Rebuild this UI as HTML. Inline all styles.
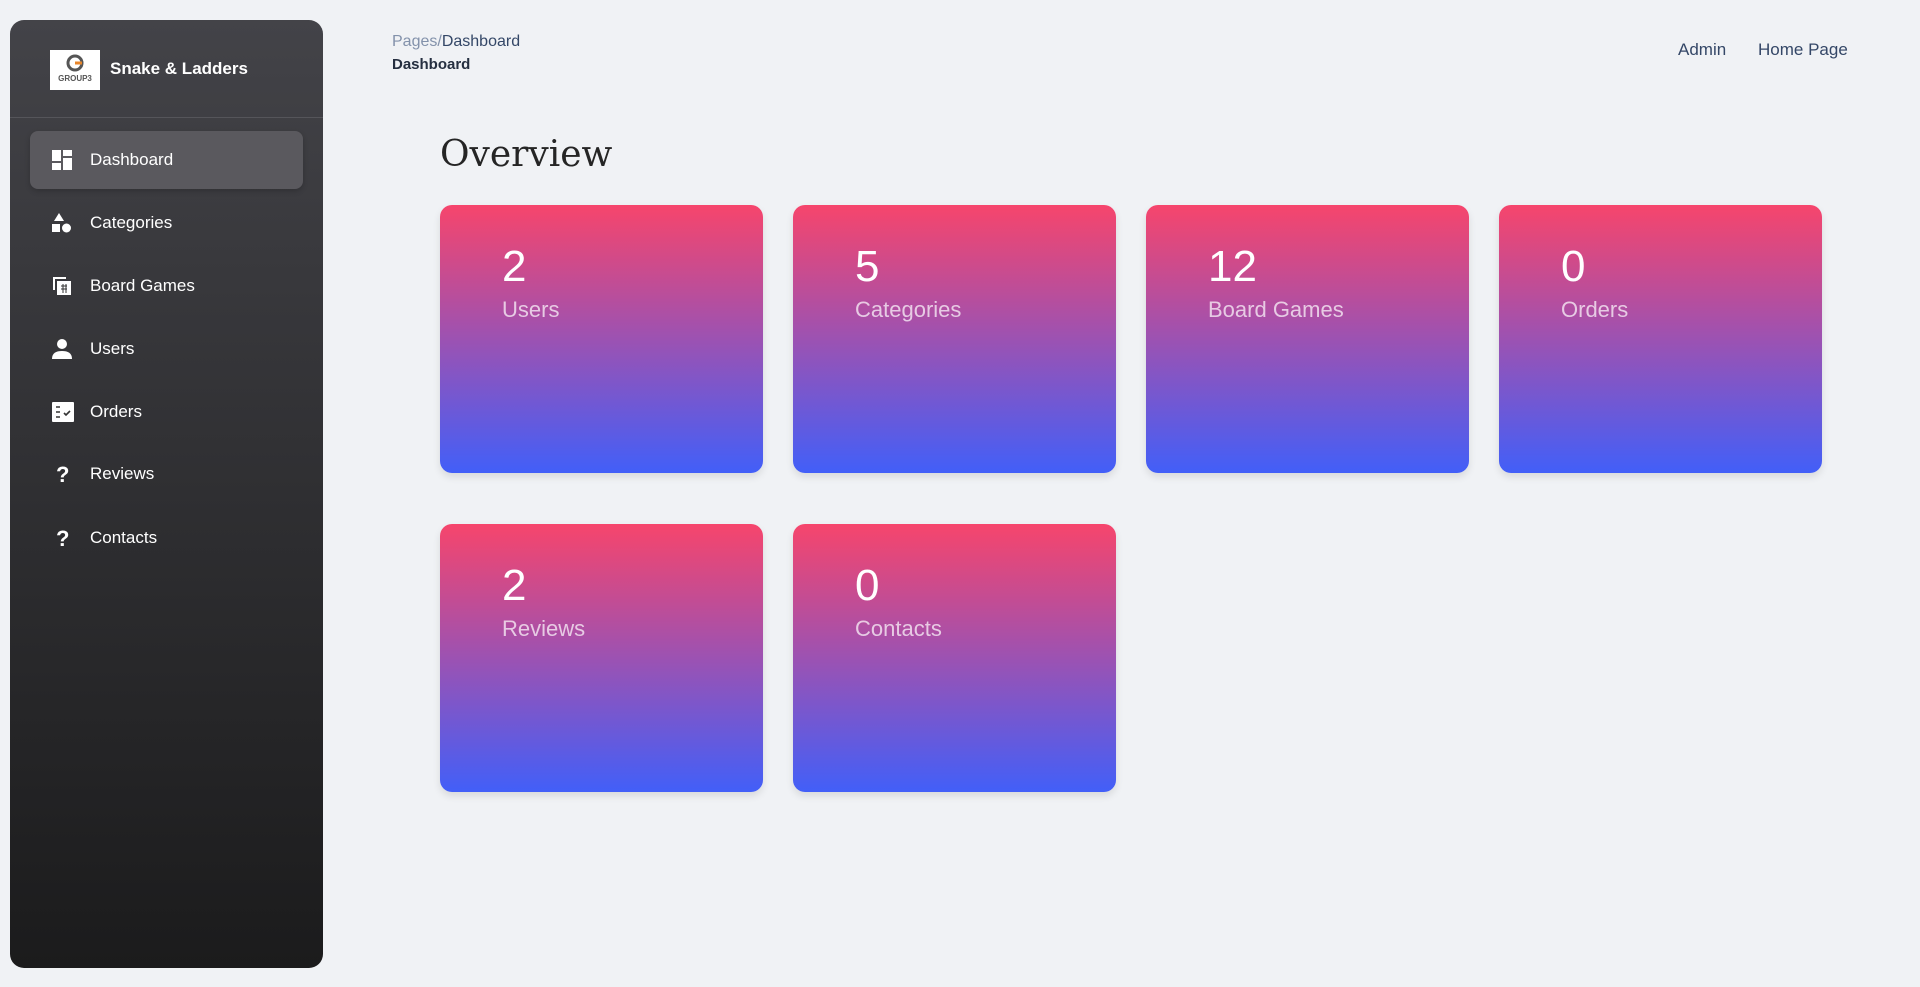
<!DOCTYPE html>
<html><head><meta charset="utf-8"><style>
*{box-sizing:border-box;margin:0;padding:0}
body{width:1920px;height:987px;background:#f0f2f5;font-family:"Liberation Sans",sans-serif;position:relative;overflow:hidden}
.sb{position:absolute;left:10px;top:20px;width:313px;height:948px;border-radius:14px;background:linear-gradient(#434348,#1b1b1c)}
.logo{position:absolute;left:40px;top:30px;width:50px;height:40px;background:#fff}
.title{position:absolute;left:100px;top:39px;color:#fff;font-weight:bold;font-size:17px}
.hr{position:absolute;left:0;right:0;top:97px;height:1px;background:#55555a}
.item{position:absolute;left:20px;width:273px;height:58px;color:#fff;font-size:17px;line-height:58px;padding-left:60px;border-radius:8px}
.item.act{background:#5a595e;box-shadow:0 2px 6px rgba(0,0,0,.2)}
.item svg{position:absolute;left:22px;top:19px}
.bc{position:absolute;left:392px;top:33px;font-size:16px;color:#344767}
.bc span{color:#8392ab}
.bc2{position:absolute;left:392px;top:56px;font-size:15px;font-weight:bold;color:#252f40}
.nav{position:absolute;top:40px;font-size:17px;color:#344767}
h1{position:absolute;left:440px;top:134px;font-family:"DejaVu Serif",serif;font-weight:normal;font-size:36px;color:#252525}
.card{position:absolute;width:323px;height:268px;border-radius:12px;background:linear-gradient(#f6456c,#425ff8);box-shadow:0 4px 8px rgba(0,0,0,.1);color:#fff}
.card b{position:absolute;left:62px;top:37px;font-size:44px;font-weight:normal}
.card i{position:absolute;left:62px;top:92px;font-size:22px;font-style:normal;color:rgba(255,255,255,.7)}
</style></head><body>
<div class="sb">
<div class="logo"><svg width="50" height="40" viewBox="0 0 50 40"><circle cx="25" cy="13" r="7" fill="none" stroke="#555" stroke-width="3"/><path d="M25 13h7" stroke="#e8862a" stroke-width="3"/><text x="25" y="31" font-size="8" text-anchor="middle" font-family="Liberation Sans" font-weight="bold" fill="#555">GROUP3</text></svg></div>
<div class="title">Snake &amp; Ladders</div>
<div class="hr"></div>
<div class="item act" style="top:111px"><svg width="20" height="20" viewBox="0 0 20 20" fill="#fff"><rect x="0" y="0" width="9" height="11"/><rect x="11" y="0" width="9" height="6"/><rect x="0" y="13" width="9" height="7"/><rect x="11" y="8" width="9" height="12"/></svg>Dashboard</div>
<div class="item" style="top:174px"><svg width="20" height="20" viewBox="0 0 20 20" fill="#fff"><path d="M7 0l5 8H2z"/><rect x="0" y="11" width="8" height="8"/><circle cx="14.5" cy="15" r="4.5"/></svg>Categories</div>
<div class="item" style="top:237px"><svg width="20" height="20" viewBox="0 0 20 20" fill="none" stroke="#fff" stroke-width="2"><path d="M2 14V2h12"/><rect x="6" y="6" width="12" height="12" fill="#fff"/><path d="M9 10h6M9 13h6M11 8v9M14 8v9" stroke="#333" stroke-width="1"/></svg>Board Games</div>
<div class="item" style="top:300px"><svg width="20" height="20" viewBox="0 0 20 20" fill="#fff"><circle cx="10" cy="5" r="5"/><path d="M0 20c0-6 4-8 10-8s10 2 10 8z"/></svg>Users</div>
<div class="item" style="top:363px"><svg width="22" height="20" viewBox="0 0 22 20" fill="#fff"><rect x="0" y="0" width="22" height="20" rx="1"/><path d="M4 5h4M4 10h4M4 15h4M12 11l2 2 4-4" stroke="#333" stroke-width="1.6" fill="none"/></svg>Orders</div>
<div class="item" style="top:425px"><svg width="20" height="20" viewBox="0 0 20 20"><text x="4" y="18" font-size="22" font-weight="bold" fill="#fff" font-family="Liberation Sans">?</text></svg>Reviews</div>
<div class="item" style="top:489px"><svg width="20" height="20" viewBox="0 0 20 20"><text x="4" y="18" font-size="22" font-weight="bold" fill="#fff" font-family="Liberation Sans">?</text></svg>Contacts</div>
</div>
<div class="bc"><span>Pages/</span>Dashboard</div>
<div class="bc2">Dashboard</div>
<div class="nav" style="left:1678px">Admin</div>
<div class="nav" style="left:1758px">Home Page</div>
<h1>Overview</h1>
<div class="card" style="left:440px;top:205px"><b>2</b><i>Users</i></div>
<div class="card" style="left:793px;top:205px"><b>5</b><i>Categories</i></div>
<div class="card" style="left:1146px;top:205px"><b>12</b><i>Board Games</i></div>
<div class="card" style="left:1499px;top:205px"><b>0</b><i>Orders</i></div>
<div class="card" style="left:440px;top:524px"><b>2</b><i>Reviews</i></div>
<div class="card" style="left:793px;top:524px"><b>0</b><i>Contacts</i></div>
</body></html>
